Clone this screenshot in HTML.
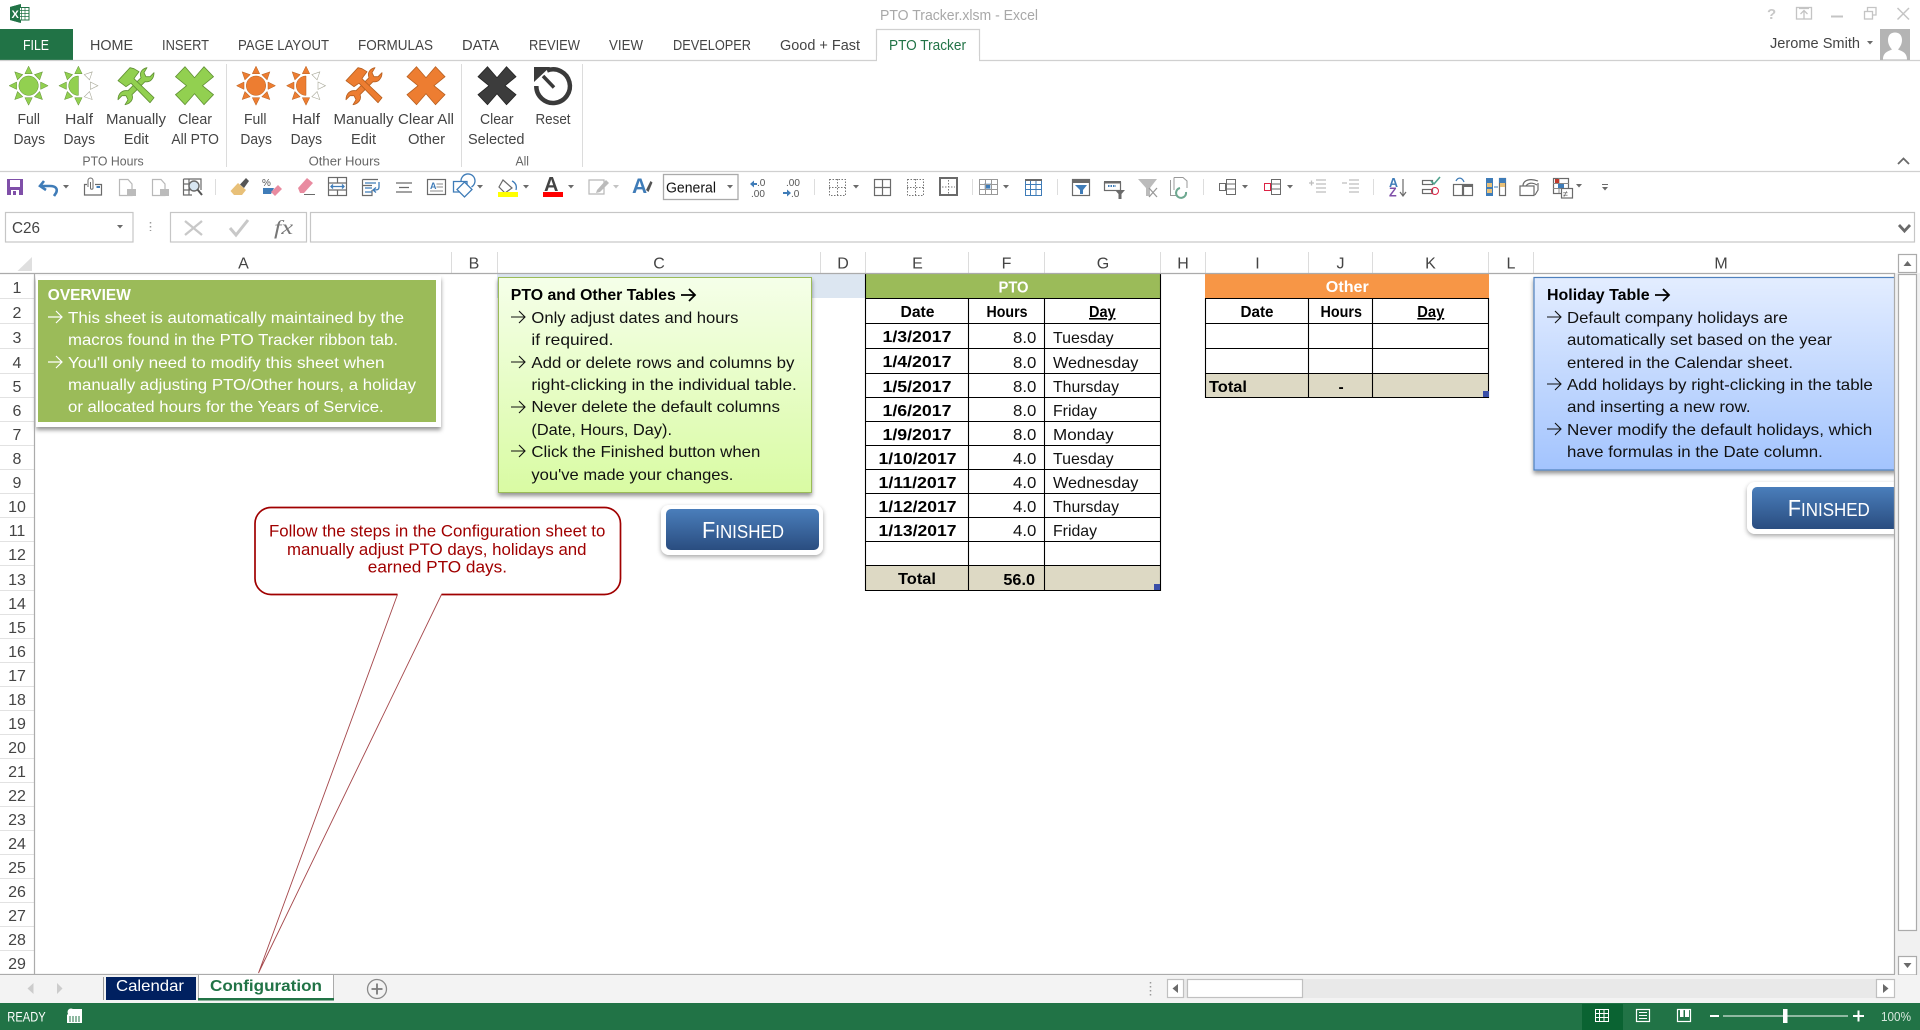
<!DOCTYPE html>
<html><head><meta charset="utf-8"><title>PTO Tracker.xlsm - Excel</title>
<style>
html,body{margin:0;padding:0;background:#fff;width:1920px;height:1030px;overflow:hidden}
svg{display:block;position:absolute;left:0;top:0;font-family:"Liberation Sans",Arial,sans-serif}
.t{font-size:15px;fill:#444}
.g{font-size:13px;fill:#666}
.h{font-size:16px;fill:#444;text-anchor:middle}
.w{font-size:16px;fill:#fff}
.k{font-size:16px;fill:#111}
.b{font-size:15.5px;font-weight:bold;fill:#000}
.c{font-size:17px;fill:#a00000}
.f{font-size:23px;fill:#fff}
.i{fill:none;stroke:#6a6a6a;stroke-width:1.2}
.l{fill:none;stroke:#b8b8b8;stroke-width:1.2}
.u{fill:none;stroke:#3f7cb8;stroke-width:1.3}
.z{fill:#6a6a6a}
</style></head><body>
<svg width="1920" height="1030" viewBox="0 0 1920 1030" xmlns="http://www.w3.org/2000/svg">
<defs>
<filter id="sh" x="-5%" y="-5%" width="110%" height="115%"><feDropShadow dx="0" dy="3" stdDeviation="2" flood-color="#000" flood-opacity=".42"/></filter>
<filter id="sh2" x="-5%" y="-10%" width="110%" height="130%"><feDropShadow dx="0" dy="2" stdDeviation="2.5" flood-color="#000" flood-opacity=".35"/></filter>
<linearGradient id="gg" x1="0" y1="0" x2="0" y2="1"><stop offset="0" stop-color="#f5ffe9"/><stop offset="1" stop-color="#d9fba3"/></linearGradient>
<linearGradient id="gb" x1="0" y1="0" x2="0" y2="1"><stop offset="0" stop-color="#e3edff"/><stop offset="1" stop-color="#a3c4fe"/></linearGradient>
<linearGradient id="gf" x1="0" y1="0" x2="0" y2="1"><stop offset="0" stop-color="#4a7ebb"/><stop offset="1" stop-color="#2a4d80"/></linearGradient>
<g id="r"><path d="M0-19.5L3.7-12H-3.7Z"/></g>
<g id="sun" stroke-width=".5"><circle cx="19" cy="19" r="9.7"/>
<use href="#r" transform="translate(19 19)"/><use href="#r" transform="translate(19 19) rotate(45)"/><use href="#r" transform="translate(19 19) rotate(90)"/><use href="#r" transform="translate(19 19) rotate(135)"/><use href="#r" transform="translate(19 19) rotate(180)"/><use href="#r" transform="translate(19 19) rotate(225)"/><use href="#r" transform="translate(19 19) rotate(270)"/><use href="#r" transform="translate(19 19) rotate(315)"/></g>
<g id="half" stroke-width=".5"><path d="M19 9.3A9.7 9.7 0 0 0 19 28.7Z"/>
<use href="#r" transform="translate(19 19)"/><use href="#r" transform="translate(19 19) rotate(225)"/><use href="#r" transform="translate(19 19) rotate(270)"/><use href="#r" transform="translate(19 19) rotate(315)"/><use href="#r" transform="translate(19 19) rotate(180)"/>
<g fill="#fff" stroke="#a8a898" stroke-width=".6"><use href="#r" transform="translate(19 19) rotate(45)"/><use href="#r" transform="translate(19 19) rotate(90)"/><use href="#r" transform="translate(19 19) rotate(135)"/></g></g>
<g id="tools" stroke-width=".8" stroke-linejoin="round">
<path d="M24 11C22 6 25 2 30 1L27 6 29 10 33 10 37 6C37 12 33 16 28 15L15 28C17 33 13 37 8 38L11 33 9 29 5 29 1 33C1 27 5 23 11 24Z"/>
<path d="M1 14L13 1 17 2 22 5 19 9 17 12 37 31 33 36 14 16.500 9 20Z"/></g>
<path id="x" stroke-width=".8" d="M9.5 0L19 11 28.5 0 38 10 27 19 38 28 28.5 38 19 27 9.5 38 0 28 11 19 0 10Z"/>
<path id="car" d="M0 0H6L3 3.5Z" fill="#6a6a6a"/>
</defs>

<!-- Title bar -->
<path d="M10 7L21 4V23L10 20Z" fill="#217346"/><rect x="19" y="7.500" width="10" height="12.500" fill="#fff" stroke="#217346"/><path d="M21.500 8V20M25 8V20M19 10.500H29M19 13.500H29M19 16.500H29" stroke="#217346" stroke-width=".7"/><path d="M10 7L20 4.300V22.700L10 20Z" fill="#217346"/><text x="11.500" y="18" font-size="11" font-weight="bold" fill="#fff">X</text>
<text x="880" y="20" font-size="14.5" fill="#a8a8a8" textLength="158" lengthAdjust="spacingAndGlyphs">PTO Tracker.xlsm - Excel</text>
<text x="1767" y="19" font-size="15" font-weight="bold" fill="#c8c8c8">?</text>
<g fill="none" stroke="#c4c4c4" stroke-width="1.3"><rect x="1796.5" y="7.5" width="15" height="11.5"/><path d="M1804 19V11M1800.5 14L1804 10.5 1807.5 14M1799 8.5H1809"/><path d="M1831 16.5H1843" stroke-width="2"/><rect x="1864.5" y="11.5" width="8" height="7.5"/><path d="M1867.5 11V7.5H1876V15H1873"/><path d="M1897.5 8L1909 19.5M1909 8L1897.5 19.5" stroke-width="1.5"/></g>

<!-- Tabs -->
<rect x="0" y="29" width="73" height="31" fill="#217346"/>
<path d="M0 60.5H876.5V29.5H979.5V60.5H1920" fill="none" stroke="#d0d0d0" stroke-width="1.2"/>
<rect x="877" y="56" width="102" height="5" fill="#fff"/>
<text x="23" y="50" font-size="14.5" fill="#fff" textLength="26" lengthAdjust="spacingAndGlyphs">FILE</text>
<text class="t" x="90" y="50" textLength="43" lengthAdjust="spacingAndGlyphs">HOME</text>
<text class="t" x="162" y="50" textLength="47" lengthAdjust="spacingAndGlyphs">INSERT</text>
<text class="t" x="238" y="50" textLength="91" lengthAdjust="spacingAndGlyphs">PAGE LAYOUT</text>
<text class="t" x="358" y="50" textLength="75" lengthAdjust="spacingAndGlyphs">FORMULAS</text>
<text class="t" x="462" y="50" textLength="37" lengthAdjust="spacingAndGlyphs">DATA</text>
<text class="t" x="529" y="50" textLength="51" lengthAdjust="spacingAndGlyphs">REVIEW</text>
<text class="t" x="609" y="50" textLength="34" lengthAdjust="spacingAndGlyphs">VIEW</text>
<text class="t" x="673" y="50" textLength="78" lengthAdjust="spacingAndGlyphs">DEVELOPER</text>
<text class="t" x="780" y="50" textLength="80" lengthAdjust="spacingAndGlyphs">Good + Fast</text>
<text class="t" x="889" y="50" style="fill:#217346" textLength="77" lengthAdjust="spacingAndGlyphs">PTO Tracker</text>
<text class="t" x="1770" y="48" textLength="90" lengthAdjust="spacingAndGlyphs">Jerome Smith</text>
<use href="#car" x="1867" y="41"/>
<rect x="1880" y="29" width="30" height="31" fill="#b4b4b4"/><path d="M1883 59.5C1883 52 1889 51 1892 49.5 1889 46 1888 43 1888 40 1888 35 1891 32.5 1895 32.5 1899 32.5 1902 35 1902 40 1902 43 1901 46 1898 49.5 1901 51 1907 52 1907 59.5Z" fill="#fff"/>

<!-- Ribbon icons -->
<g fill="#92d050" stroke="#5f8f33">
<use href="#sun" x="9.6" y="66.7"/><use href="#half" x="59.4" y="66.7"/><use href="#tools" x="117" y="66.7"/><use href="#x" x="175.5" y="66.7"/>
</g>
<g fill="#ed7d31" stroke="#b65f20">
<use href="#sun" x="237" y="66.7"/><use href="#half" x="287" y="66.7"/><use href="#tools" x="345" y="66.7"/><use href="#x" x="407" y="66.7"/>
</g>
<use href="#x" x="478" y="66.7" fill="#3c3c3c" stroke="#222"/>
<g fill="none" stroke="#3a3a3a"><path d="M547 70.500A16.800 16.800 0 1 1 536.300 86" stroke-width="4.500"/><path d="M543 76L554 87.500" stroke-width="3.500"/></g><path d="M534 67H550L534 82Z" fill="#3a3a3a"/>

<!-- Ribbon labels -->
<text class="t" x="17.5" y="124" textLength="22.5" lengthAdjust="spacingAndGlyphs">Full</text>
<text class="t" x="13.5" y="144" textLength="31.5" lengthAdjust="spacingAndGlyphs">Days</text>
<text class="t" x="65" y="124" textLength="28" lengthAdjust="spacingAndGlyphs">Half</text>
<text class="t" x="63.5" y="144" textLength="31.5" lengthAdjust="spacingAndGlyphs">Days</text>
<text class="t" x="106" y="124" textLength="60" lengthAdjust="spacingAndGlyphs">Manually</text>
<text class="t" x="123.7" y="144" textLength="25" lengthAdjust="spacingAndGlyphs">Edit</text>
<text class="t" x="178" y="124" textLength="34" lengthAdjust="spacingAndGlyphs">Clear</text>
<text class="t" x="171.4" y="144" textLength="47.5" lengthAdjust="spacingAndGlyphs">All PTO</text>
<text class="t" x="244" y="124" textLength="22.5" lengthAdjust="spacingAndGlyphs">Full</text>
<text class="t" x="240.4" y="144" textLength="31.5" lengthAdjust="spacingAndGlyphs">Days</text>
<text class="t" x="292" y="124" textLength="28" lengthAdjust="spacingAndGlyphs">Half</text>
<text class="t" x="290.6" y="144" textLength="31.5" lengthAdjust="spacingAndGlyphs">Days</text>
<text class="t" x="333.5" y="124" textLength="60" lengthAdjust="spacingAndGlyphs">Manually</text>
<text class="t" x="351" y="144" textLength="25" lengthAdjust="spacingAndGlyphs">Edit</text>
<text class="t" x="398" y="124" textLength="56" lengthAdjust="spacingAndGlyphs">Clear All</text>
<text class="t" x="408" y="144" textLength="37" lengthAdjust="spacingAndGlyphs">Other</text>
<text class="t" x="480" y="124" textLength="33.5" lengthAdjust="spacingAndGlyphs">Clear</text>
<text class="t" x="468" y="144" textLength="56.5" lengthAdjust="spacingAndGlyphs">Selected</text>
<text class="t" x="535.5" y="124" textLength="35" lengthAdjust="spacingAndGlyphs">Reset</text>
<text class="g" x="82.4" y="165.5" textLength="61.3" lengthAdjust="spacingAndGlyphs">PTO Hours</text>
<text class="g" x="308.6" y="165.5" textLength="71.4" lengthAdjust="spacingAndGlyphs">Other Hours</text>
<text class="g" x="515.5" y="165.5" textLength="13.5" lengthAdjust="spacingAndGlyphs">All</text>
<path d="M226.5 64V167M461.5 64V167M582.5 64V167" stroke="#dcdcdc"/>
<path d="M1898 164L1903.5 158.5 1909 164" fill="none" stroke="#6a6a6a" stroke-width="1.8"/>
<path d="M0 171.5H1920" stroke="#d0d0d0" stroke-width="1.2"/>

<!-- QAT -->
<path d="M7 179H23V195H7Z" fill="#7f4fa8"/><rect x="10" y="180" width="10" height="7" fill="#fff"/><rect x="11" y="190" width="8" height="5" fill="#fff"/><rect x="13" y="191" width="3" height="4" fill="#7f4fa8"/>
<path d="M44 181L40 186 46 190M41 186H50C56 186 58 189 56 193L54 196" fill="none" stroke="#3f7cb8" stroke-width="2.6"/><use href="#car" x="63" y="185"/>
<path class="i" d="M87 184.500H84.500V195H101.500V184.500H95"/><path d="M88 187V180.500A2.500 2.500 0 0 1 93 180.500V188A1.200 1.200 0 0 1 90.500 188V182" fill="none" stroke="#6a6a6a"/><rect x="96.500" y="186" width="3.500" height="2" fill="#3f7cb8"/>
<path class="l" d="M119.5 179.5H128L132 184V195.5H119.5Z"/><rect x="127" y="189" width="9" height="7" fill="#bbb"/>
<path class="l" d="M152.5 179.5H161L165 184V195.5H152.5Z"/><rect x="160" y="189" width="9" height="7" fill="#bbb"/>
<path class="i" d="M183.5 179H201V190M183.5 179V195H192M183.5 184H195M183.5 190H190M189 179V195"/><circle cx="194" cy="186" r="5" fill="#d8e6f2" stroke="#6a6a6a" stroke-width="1.4"/><path d="M197.5 189.5L202 195" stroke="#555" stroke-width="2"/>
<path d="M215.5 179V195" stroke="#ddd"/>
<path d="M230.500 191L238 183 246 190 242 195 234 195Z" fill="#e8c078"/><path d="M240 184.500L246 178 249 181 244 188Z" fill="#555"/>
<text x="262" y="186" font-size="10" fill="#555">%</text><path d="M263 188H274L271 194H263Z" fill="#3f7cb8"/><path d="M271 192L278 185 282 189 275 196Z" fill="#e98ba0"/>
<path d="M298 188L307 178 313 183 304 193 300 193Z" fill="#e98ba0"/><path d="M304 194.5H315" stroke="#6a6a6a"/>
<rect x="328.5" y="177.5" width="18" height="18" class="i"/><path class="i" d="M329 183H346M329 190H346M337.5 177V183M337.5 190V195"/><path d="M331 186.5H344M333 184.5L331 186.5 333 188.5M342 184.5L344 186.5 342 188.5" class="u"/>
<path class="i" d="M362.5 179.5H378M362.5 179.5V195.5H372V190M362.5 185.5H372"/><path d="M365 183H376M365 188H372M365 192H372" stroke="#3f7cb8" stroke-width="1.2"/><path d="M379 182V187C379 190 377 190 373 190M376 187.5L373 190 376 192.5" class="u"/>
<path d="M396 183H412M399 187.5H409M396 192H412" class="i"/>
<rect x="427.5" y="179.5" width="18" height="15" class="i"/><text x="430" y="189" font-size="9" font-weight="bold" fill="#3f7cb8">A</text><path d="M436.5 184H443M436.5 187H443M430 191H443" stroke="#888"/>
<path d="M453.500 181.500H467V192H453.500Z" class="u"/><path d="M464.500 182L472 189.500 464.500 197 457 189.500Z" fill="#fff" class="u" style="fill:#fff"/><path d="M461 181A7 7 0 1 1 471.500 187" class="u"/><use href="#car" x="477" y="185"/>
<path d="M503 180L512 188 505 193 499 187Z" fill="#fff" stroke="#6a6a6a" stroke-width="1.2"/><path d="M512 181C516 183 517 186 516 190" class="u"/><rect x="498" y="192" width="20" height="5" fill="#ff0"/><use href="#car" x="523" y="185"/>
<text x="544" y="191" font-size="20" font-weight="bold" fill="#444">A</text><rect x="543" y="192" width="20" height="5" fill="#f00"/><use href="#car" x="568" y="185"/>
<path d="M589 180H604V194H589Z" class="l"/><path d="M597 190L606 180 609 183 600 192 596 193Z" fill="#bbb"/><use href="#car" x="613" y="185" opacity=".4"/>
<text x="632" y="193" font-size="21" font-weight="bold" fill="#3f7cb8">A</text><path d="M646 190L650.500 181 652.500 182.500 648.500 192Z" fill="#555"/>
<rect x="663.5" y="174.5" width="74.5" height="25" fill="#fff" stroke="#aaa" stroke-width="1.3"/>
<text x="666" y="192.5" font-size="15" fill="#111" textLength="50" lengthAdjust="spacingAndGlyphs">General</text><use href="#car" x="727" y="185"/>
<path d="M750 184L754 180.5V183H757V185H754V187.5Z" fill="#3f7cb8"/><text x="757" y="186" font-size="10" fill="#555">.0</text><text x="751" y="197" font-size="10" fill="#555">.00</text>
<text x="786" y="186" font-size="10" fill="#555">.00</text><path d="M783 192H787V189.5L791 193 787 196.5V194H783Z" fill="#3f7cb8"/><text x="791" y="197" font-size="10" fill="#555">.0</text>
<path d="M814.5 179V195M972.5 179V195M1057.5 179V195M1203.5 179V195M1373.5 179V195" stroke="#ddd"/>
<g fill="none" stroke="#777" stroke-dasharray="1.5 1.5"><rect x="829.5" y="179.5" width="16" height="16"/><path d="M829 187.5H846M837.5 179V196"/><rect x="907.5" y="179.5" width="16" height="16"/><path d="M907 187.5H924M915.5 179V196" /></g><use href="#car" x="853" y="185"/>
<g class="i"><rect x="874.5" y="179.5" width="16" height="16"/><path d="M874 187.5H891M882.5 179V196"/></g>
<rect x="940" y="178" width="17" height="17" class="i" style="stroke-width:2"/><path d="M948.5 180V194M942 187H955" stroke="#777" stroke-dasharray="1.5 1.5"/>
<rect x="984" y="183" width="8" height="7" fill="#c9dcef"/><rect x="986" y="184.500" width="4" height="4" fill="#3f7cb8"/><g fill="none" stroke="#999"><rect x="979.5" y="179.5" width="18" height="15"/><path d="M979 184.5H998M979 189.5H998M985.5 179V195M991.5 179V195"/></g><use href="#car" x="1003" y="185"/>
<g fill="none" stroke="#3f7cb8"><path d="M1025.5 179.5H1041.5V195.5H1025.5ZM1025 184.5H1042M1025 189.5H1042M1030.5 180V195M1036 180V195"/></g><path d="M1025 179H1042V181H1025Z" fill="#6a6a6a"/>
<rect x="1072.5" y="179.5" width="17" height="16" class="i"/><rect x="1072" y="179" width="18" height="4" fill="#6a6a6a"/><path d="M1075 185H1087L1083 190V194H1080V190Z" fill="#3f7cb8"/>
<rect x="1104.5" y="182.5" width="16" height="8" class="i"/><rect x="1104" y="181" width="17" height="2.500" fill="#6a6a6a"/><path d="M1108 186H1116" stroke="#3f7cb8" stroke-width="2" stroke-dasharray="1.500 1"/><path d="M1115 190H1125L1121.5 194V199H1118.5V194Z" fill="#6a6a6a"/>
<path d="M1138 179H1157L1150 188V196H1146V188Z" fill="#bbb"/><path d="M1149 188L1157 197M1157 188L1149 197" stroke="#999" stroke-width="1.3"/>
<path d="M1170.5 180V195.5H1176" stroke="#999" fill="none"/><path d="M1174 177.5H1183L1187 181V188M1174 177.5V190" stroke="#999" fill="none"/><path d="M1186 192A5 5 0 1 1 1180 188" fill="none" stroke="#6da890" stroke-width="2"/>
<g fill="none" stroke="#6a6a6a"><rect x="1219.5" y="183.5" width="6" height="7"/><rect x="1226.5" y="179.5" width="9" height="15"/><path d="M1226 184H1236M1226 189H1236"/></g><use href="#car" x="1242" y="185"/>
<g fill="none" stroke="#6a6a6a"><rect x="1264.5" y="183.5" width="6" height="7" stroke="#d24"/><rect x="1271.5" y="179.5" width="9" height="15"/><path d="M1271 184H1281M1271 189H1281"/></g><use href="#car" x="1287" y="185"/>
<g stroke="#bdbdbd" fill="none" stroke-width="1.3"><path d="M1316 180H1326M1316 184H1326M1316 188H1326M1316 192H1326M1309 183H1314M1311.5 180.500V185.500"/><path d="M1349 180H1359M1349 184H1359M1349 188H1359M1349 192H1359M1342 183H1347"/></g>
<text x="1389" y="187" font-size="12.500" font-weight="bold" fill="#3f7cb8">A</text><text x="1389" y="196.500" font-size="12.500" font-weight="bold" fill="#7f4fa8">Z</text><path d="M1403 179V195M1400 192L1403 196 1406 192" class="i"/>
<rect x="1422.500" y="180.500" width="10" height="4" class="i"/><rect x="1422.500" y="189.500" width="10" height="4" class="i"/><path d="M1431 181L1434 184 1440 177" fill="none" stroke="#4fa28d" stroke-width="1.6"/><circle cx="1435" cy="191" r="3.500" fill="none" stroke="#d24"/>
<rect x="1453.500" y="184.500" width="9" height="11" class="i"/><rect x="1463.500" y="184.500" width="9" height="11" class="i"/><rect x="1463" y="184" width="10" height="3" fill="#6a6a6a"/><path d="M1456 181C1458 177 1462 177 1464 182" class="u"/>
<rect x="1486" y="178" width="7" height="18" fill="#3f7cb8"/><rect x="1487" y="183" width="5" height="4" fill="#e8c078"/><rect x="1487" y="189" width="5" height="4" fill="#e8c078"/><path d="M1494 187H1498" stroke="#3f7cb8"/><rect x="1499.500" y="178.500" width="6" height="17" class="i"/><rect x="1499" y="178" width="7" height="5" fill="#3f7cb8"/><rect x="1500" y="183" width="5" height="4" fill="#e8c078"/>
<rect x="1520" y="186" width="14" height="9.500" class="i"/><path d="M1523 186C1523 180 1530 178 1538 181M1526 186C1528 183 1532 182 1537 185M1535 195L1538 190V183" class="i"/>
<rect x="1553.500" y="178.500" width="15" height="15" class="i"/><path d="M1553 183.500H1569M1553 188.500H1569M1559 178V193" stroke="#888"/><rect x="1555" y="179" width="4" height="4" fill="#c0392b"/><rect x="1558" y="184" width="6" height="4" fill="#3f7cb8"/><rect x="1561.500" y="188.500" width="11" height="9.500" class="i" style="fill:#fff"/><text x="1563" y="197" font-size="9" fill="#555">≠</text><use href="#car" x="1576" y="184"/>
<path d="M1602 184.500H1608" stroke="#6a6a6a"/><use href="#car" x="1602" y="187"/>

<!-- Formula bar -->
<g fill="#fff" stroke="#c6c6c6" stroke-width="1.2"><rect x="5.500" y="212.500" width="127.500" height="29.500"/><rect x="170.500" y="212.500" width="136" height="29.500"/><rect x="310.500" y="212.500" width="1604" height="29.500"/></g>
<text x="12" y="233" font-size="15.500" fill="#444" textLength="28" lengthAdjust="spacingAndGlyphs">C26</text><use href="#car" x="117" y="225"/>
<path d="M150.500 222V231" stroke="#999" stroke-dasharray="1.500 2.500" stroke-width="1.500"/>
<path d="M185 221L202 235M202 221L185 235" stroke="#c8c8c8" stroke-width="2.300"/>
<path d="M230 228L236 235 248 220" fill="none" stroke="#c8c8c8" stroke-width="3"/>
<text x="274" y="234" font-size="20" font-style="italic" fill="#777" font-family="Liberation Serif" textLength="19" lengthAdjust="spacingAndGlyphs">fx</text>
<path d="M1899 225L1904.500 231 1910 225" fill="none" stroke="#6a6a6a" stroke-width="2.800"/>

<!-- Grid headers -->
<path d="M32 257V271H17.500Z" fill="#dfdfdf"/>
<path d="M451.500 252V273M497.500 252V273M820.500 252V273M865.500 252V273M968.500 252V273M1044.500 252V273M1160.500 252V273M1205.500 252V273M1308.500 252V273M1372.500 252V273M1488.500 252V273M1533.500 252V273" stroke="#dcdcdc"/>
<text class="h" x="243.500" y="268.700">A</text><text class="h" x="474" y="268.700">B</text><text class="h" x="659" y="268.700">C</text><text class="h" x="843" y="268.700">D</text><text class="h" x="917.500" y="268.700">E</text><text class="h" x="1006.500" y="268.700">F</text><text class="h" x="1103" y="268.700">G</text><text class="h" x="1183" y="268.700">H</text><text class="h" x="1257.500" y="268.700">I</text><text class="h" x="1340.500" y="268.700">J</text><text class="h" x="1430.500" y="268.700">K</text><text class="h" x="1511" y="268.700">L</text><text class="h" x="1721" y="268.700">M</text>
<rect x="497" y="274" width="368" height="24" fill="#dce6f1"/>
<path d="M0 298.500H34M0 323.500H34M0 348.500H34M0 373.500H34M0 397.500H34M0 421.500H34M0 445.500H34M0 469.500H34M0 493.500H34M0 517.500H34M0 541.500H34M0 565.500H34M0 590.500H34M0 614.500H34M0 638.500H34M0 662.500H34M0 686.500H34M0 710.500H34M0 734.500H34M0 758.500H34M0 782.500H34M0 806.500H34M0 830.500H34M0 854.500H34M0 878.500H34M0 902.500H34M0 926.500H34M0 950.500H34" stroke="#e2e2e2"/>
<g>
<text class="h" x="17" y="293">1</text><text class="h" x="17" y="318">2</text><text class="h" x="17" y="343">3</text><text class="h" x="17" y="368">4</text><text class="h" x="17" y="392">5</text><text class="h" x="17" y="416">6</text><text class="h" x="17" y="440">7</text><text class="h" x="17" y="464">8</text><text class="h" x="17" y="488">9</text><text class="h" x="17" y="512">10</text><text class="h" x="17" y="536">11</text><text class="h" x="17" y="560">12</text><text class="h" x="17" y="585">13</text><text class="h" x="17" y="609">14</text><text class="h" x="17" y="633">15</text><text class="h" x="17" y="657">16</text><text class="h" x="17" y="681">17</text><text class="h" x="17" y="705">18</text><text class="h" x="17" y="729">19</text><text class="h" x="17" y="753">20</text><text class="h" x="17" y="777">21</text><text class="h" x="17" y="801">22</text><text class="h" x="17" y="825">23</text><text class="h" x="17" y="849">24</text><text class="h" x="17" y="873">25</text><text class="h" x="17" y="897">26</text><text class="h" x="17" y="921">27</text><text class="h" x="17" y="945">28</text><text class="h" x="17" y="969">29</text>
</g>

<!-- Overview -->
<rect x="36" y="276" width="405" height="151" fill="#fff" filter="url(#sh)"/>
<rect x="38" y="280" width="398" height="142" fill="#9bbb59"/>
<text class="w" x="47.800" y="300" font-weight="bold" textLength="83" lengthAdjust="spacingAndGlyphs">OVERVIEW</text>
<g fill="none" stroke="#fff" stroke-width="1.200"><path d="M48 317H62M56 311L62 317 56 323M48 362H62M56 356L62 362 56 368"/></g>
<text class="w" x="68" y="323" textLength="336" lengthAdjust="spacingAndGlyphs">This sheet is automatically maintained by the</text>
<text class="w" x="68" y="345" textLength="330" lengthAdjust="spacingAndGlyphs">macros found in the PTO Tracker ribbon tab.</text>
<text class="w" x="68" y="368" textLength="316.500" lengthAdjust="spacingAndGlyphs">You'll only need to modify this sheet when</text>
<text class="w" x="68" y="390" textLength="348" lengthAdjust="spacingAndGlyphs">manually adjusting PTO/Other hours, a holiday</text>
<text class="w" x="68" y="412" textLength="315.700" lengthAdjust="spacingAndGlyphs">or allocated hours for the Years of Service.</text>

<!-- Green box -->
<rect x="498.500" y="277.500" width="313" height="215" fill="url(#gg)" stroke="#9bbb59" filter="url(#sh)"/>
<text class="b" x="510.800" y="300" textLength="165" lengthAdjust="spacingAndGlyphs">PTO and Other Tables</text>
<path d="M681 295H695M689 289L695 295 689 301" fill="none" stroke="#000" stroke-width="1.800"/>
<g fill="none" stroke="#111" stroke-width="1.100"><path d="M511 317H525M519 311L525 317 519 323M511 362H525M519 356L525 362 519 368M511 407H525M519 401L525 407 519 413M511 451H525M519 445L525 451 519 457"/></g>
<text class="k" x="531.400" y="323" textLength="207" lengthAdjust="spacingAndGlyphs">Only adjust dates and hours</text>
<text class="k" x="531.400" y="345" textLength="82" lengthAdjust="spacingAndGlyphs">if required.</text>
<text class="k" x="531.400" y="368" textLength="263" lengthAdjust="spacingAndGlyphs">Add or delete rows and columns by</text>
<text class="k" x="531.400" y="390" textLength="265.400" lengthAdjust="spacingAndGlyphs">right-clicking in the individual table.</text>
<text class="k" x="531.400" y="412" textLength="248.600" lengthAdjust="spacingAndGlyphs">Never delete the default columns</text>
<text class="k" x="531.400" y="435" textLength="140.600" lengthAdjust="spacingAndGlyphs">(Date, Hours, Day).</text>
<text class="k" x="531.400" y="457" textLength="229" lengthAdjust="spacingAndGlyphs">Click the Finished button when</text>
<text class="k" x="531.400" y="480" textLength="202" lengthAdjust="spacingAndGlyphs">you've made your changes.</text>

<!-- Finished button 1 -->
<rect x="661" y="505" width="162" height="50" rx="8" fill="#fff" filter="url(#sh2)"/>
<rect x="666" y="509" width="153" height="41" rx="5" fill="url(#gf)"/>
<text class="f" x="702" y="538" textLength="82" lengthAdjust="spacingAndGlyphs">F<tspan font-size="18">INISHED</tspan></text>

<!-- Callout -->
<path d="M271 507.500H604.500A16 16 0 0 1 620.500 523.500V578.500A16 16 0 0 1 604.500 594.500H441.500L258.500 973 397.500 594.500H271A16 16 0 0 1 255 578.500V523.500A16 16 0 0 1 271 507.500Z" fill="#fff"/>
<path d="M441.500 594.500L258.500 973 397.500 594.500" fill="none" stroke="#a4464a" stroke-width=".9"/>
<path d="M397.500 594.500H271A16 16 0 0 1 255 578.500V523.500A16 16 0 0 1 271 507.500H604.500A16 16 0 0 1 620.500 523.500V578.500A16 16 0 0 1 604.500 594.500H441.500" fill="none" stroke="#a00000" stroke-width="1.700"/>
<text class="c" x="269" y="536.700" textLength="336.300" lengthAdjust="spacingAndGlyphs">Follow the steps in the Configuration sheet to</text>
<text class="c" x="287" y="555" textLength="299.500" lengthAdjust="spacingAndGlyphs">manually adjust PTO days, holidays and</text>
<text class="c" x="367.800" y="572.700" textLength="139.200" lengthAdjust="spacingAndGlyphs">earned PTO days.</text>

<!-- PTO table -->
<rect x="865.500" y="273" width="295" height="25" fill="#9bbb59"/>
<rect x="865.500" y="565" width="295" height="25" fill="#ddd9c4"/>
<path d="M865.500 273V590.500H1160.500V273M968.500 298V590M1044.500 298V590M865 298.500H1160M865 323.500H1160M865 348.500H1160M865 373.500H1160M865 397.500H1160M865 421.500H1160M865 445.500H1160M865 469.500H1160M865 493.500H1160M865 517.500H1160M865 541.500H1160M865 565.500H1160" fill="none" stroke="#000" stroke-width="1.100"/>
<rect x="1154" y="584" width="6" height="6" fill="#3a4fa8"/>
<text class="b" x="998.500" y="292.500" style="fill:#fff" textLength="30" lengthAdjust="spacingAndGlyphs">PTO</text>
<text class="b" x="900.500" y="317" textLength="34" lengthAdjust="spacingAndGlyphs">Date</text>
<text class="b" x="986.500" y="317" textLength="41" lengthAdjust="spacingAndGlyphs">Hours</text>
<text class="b" x="1089" y="317" text-decoration="underline" textLength="26.600" lengthAdjust="spacingAndGlyphs">Day</text>
<text class="b" x="882.500" y="342" textLength="69" lengthAdjust="spacingAndGlyphs">1/3/2017</text><text class="k" x="1013" y="343" textLength="23.400" lengthAdjust="spacingAndGlyphs">8.0</text><text class="k" x="1053" y="343" textLength="60.600" lengthAdjust="spacingAndGlyphs">Tuesday</text>
<text class="b" x="882.500" y="367" textLength="69" lengthAdjust="spacingAndGlyphs">1/4/2017</text><text class="k" x="1013" y="368" textLength="23.400" lengthAdjust="spacingAndGlyphs">8.0</text><text class="k" x="1053" y="368" textLength="85.400" lengthAdjust="spacingAndGlyphs">Wednesday</text>
<text class="b" x="882.500" y="392" textLength="69" lengthAdjust="spacingAndGlyphs">1/5/2017</text><text class="k" x="1013" y="392" textLength="23.400" lengthAdjust="spacingAndGlyphs">8.0</text><text class="k" x="1053" y="392" textLength="66" lengthAdjust="spacingAndGlyphs">Thursday</text>
<text class="b" x="882.500" y="416" textLength="69" lengthAdjust="spacingAndGlyphs">1/6/2017</text><text class="k" x="1013" y="416" textLength="23.400" lengthAdjust="spacingAndGlyphs">8.0</text><text class="k" x="1053" y="416" textLength="44" lengthAdjust="spacingAndGlyphs">Friday</text>
<text class="b" x="882.500" y="440" textLength="69" lengthAdjust="spacingAndGlyphs">1/9/2017</text><text class="k" x="1013" y="440" textLength="23.400" lengthAdjust="spacingAndGlyphs">8.0</text><text class="k" x="1053" y="440" textLength="60.600" lengthAdjust="spacingAndGlyphs">Monday</text>
<text class="b" x="878.500" y="464" textLength="78" lengthAdjust="spacingAndGlyphs">1/10/2017</text><text class="k" x="1013" y="464" textLength="23.400" lengthAdjust="spacingAndGlyphs">4.0</text><text class="k" x="1053" y="464" textLength="60.600" lengthAdjust="spacingAndGlyphs">Tuesday</text>
<text class="b" x="878.500" y="488" textLength="78" lengthAdjust="spacingAndGlyphs">1/11/2017</text><text class="k" x="1013" y="488" textLength="23.400" lengthAdjust="spacingAndGlyphs">4.0</text><text class="k" x="1053" y="488" textLength="85.400" lengthAdjust="spacingAndGlyphs">Wednesday</text>
<text class="b" x="878.500" y="512" textLength="78" lengthAdjust="spacingAndGlyphs">1/12/2017</text><text class="k" x="1013" y="512" textLength="23.400" lengthAdjust="spacingAndGlyphs">4.0</text><text class="k" x="1053" y="512" textLength="66" lengthAdjust="spacingAndGlyphs">Thursday</text>
<text class="b" x="878.500" y="536" textLength="78" lengthAdjust="spacingAndGlyphs">1/13/2017</text><text class="k" x="1013" y="536" textLength="23.400" lengthAdjust="spacingAndGlyphs">4.0</text><text class="k" x="1053" y="536" textLength="44" lengthAdjust="spacingAndGlyphs">Friday</text>
<text class="b" x="898" y="584" textLength="38" lengthAdjust="spacingAndGlyphs">Total</text>
<text class="b" x="1003.400" y="585" textLength="31.600" lengthAdjust="spacingAndGlyphs">56.0</text>

<!-- Other table -->
<rect x="1205" y="273" width="284" height="25" fill="#f79646"/>
<rect x="1205" y="373" width="284" height="24" fill="#ddd9c4"/>
<path d="M1205.500 298V397.500H1488.500V298M1308.500 298V397M1372.500 298V397M1205 298.500H1489M1205 323.500H1489M1205 348.500H1489M1205 373.500H1489" fill="none" stroke="#000" stroke-width="1.100"/>
<rect x="1483" y="391" width="6" height="6" fill="#3a4fa8"/>
<text class="b" x="1325.800" y="292" style="fill:#fff" textLength="43" lengthAdjust="spacingAndGlyphs">Other</text>
<text class="b" x="1240.500" y="317" textLength="33" lengthAdjust="spacingAndGlyphs">Date</text>
<text class="b" x="1320.500" y="317" textLength="41.500" lengthAdjust="spacingAndGlyphs">Hours</text>
<text class="b" x="1417.300" y="317" text-decoration="underline" textLength="27" lengthAdjust="spacingAndGlyphs">Day</text>
<text class="b" x="1209" y="392" textLength="38" lengthAdjust="spacingAndGlyphs">Total</text>
<text class="b" x="1338.500" y="392">-</text>

<!-- Blue box -->
<rect x="1534" y="277.500" width="375" height="192.500" fill="url(#gb)" stroke="#4f81bd" stroke-width="1.200" filter="url(#sh)"/>
<text class="b" x="1547" y="300" textLength="102.600" lengthAdjust="spacingAndGlyphs">Holiday Table</text>
<path d="M1655 295H1669M1663 289L1669 295 1663 301" fill="none" stroke="#000" stroke-width="1.800"/>
<g fill="none" stroke="#111" stroke-width="1.100"><path d="M1547 317H1561M1555 311L1561 317 1555 323M1547 384H1561M1555 378L1561 384 1555 390M1547 429H1561M1555 423L1561 429 1555 435"/></g>
<text class="k" x="1567" y="323" textLength="220.800" lengthAdjust="spacingAndGlyphs">Default company holidays are</text>
<text class="k" x="1567" y="345" textLength="265" lengthAdjust="spacingAndGlyphs">automatically set based on the year</text>
<text class="k" x="1567" y="368" textLength="226" lengthAdjust="spacingAndGlyphs">entered in the Calendar sheet.</text>
<text class="k" x="1567" y="390" textLength="305.800" lengthAdjust="spacingAndGlyphs">Add holidays by right-clicking in the table</text>
<text class="k" x="1567" y="412" textLength="183.600" lengthAdjust="spacingAndGlyphs">and inserting a new row.</text>
<text class="k" x="1567" y="435" textLength="305.300" lengthAdjust="spacingAndGlyphs">Never modify the default holidays, which</text>
<text class="k" x="1567" y="457" textLength="255.800" lengthAdjust="spacingAndGlyphs">have formulas in the Date column.</text>

<!-- Finished button 2 -->
<rect x="1747" y="482" width="170" height="52" rx="8" fill="#fff" filter="url(#sh2)"/>
<rect x="1752" y="487" width="165" height="42" rx="5" fill="url(#gf)"/>
<text class="f" x="1787.800" y="516" textLength="82" lengthAdjust="spacingAndGlyphs">F<tspan font-size="18">INISHED</tspan></text>

<!-- Grid frame + scrollbars -->
<rect x="1895" y="252" width="25" height="723" fill="#fff"/>
<rect x="1895" y="273" width="25" height="702" fill="#f1f1f1"/>
<path d="M0 273.500H1895M34.500 273V974M1894.500 273V974M0 974.500H1895" fill="none" stroke="#ababab" stroke-width="1.200"/>
<g fill="#fff" stroke="#ababab" stroke-width="1.200"><rect x="1898.500" y="254.500" width="18" height="18"/><rect x="1898.500" y="274.500" width="18" height="656"/><rect x="1898.500" y="956.500" width="18" height="18.500"/></g>
<path d="M1903.500 266H1911.500L1907.500 261Z" fill="#6a6a6a"/><path d="M1903.500 963H1911.500L1907.500 968Z" fill="#6a6a6a"/>

<!-- Sheet tabs -->
<rect x="0" y="975" width="1920" height="28" fill="#f3f3f3"/>
<path d="M33.500 983V994L27.500 988.500Z" fill="#ccc"/><path d="M57 983V994L62.500 988.500Z" fill="#ccc"/>
<path d="M103.500 977V1000" stroke="#999"/>
<rect x="106" y="977" width="90" height="23" fill="#002060"/>
<text x="116" y="991" font-size="16" fill="#fff" textLength="68" lengthAdjust="spacingAndGlyphs">Calendar</text>
<path d="M198.500 975V1000H333.500V975" fill="#fff" stroke="#ababab"/>
<rect x="198" y="998" width="136" height="2.500" fill="#217346"/>
<text x="210" y="991" font-size="16" font-weight="bold" fill="#217346" textLength="112" lengthAdjust="spacingAndGlyphs">Configuration</text>
<circle cx="377" cy="989" r="9.500" fill="none" stroke="#8a8a8a" stroke-width="1.300"/><path d="M371.500 989H382.500M377 983.500V994.500" stroke="#7a7a7a" stroke-width="1.800"/>
<path d="M1150.500 982V996" stroke="#999" stroke-dasharray="1.500 2.500" stroke-width="1.500"/>
<rect x="1168" y="979" width="708" height="19" fill="#e9e9e9"/>
<g fill="#fff" stroke="#c0c0c0" stroke-width="1.200"><rect x="1167.500" y="979.500" width="16" height="18"/><rect x="1187.500" y="979.500" width="115" height="18"/><rect x="1876.500" y="979.500" width="18" height="18"/></g>
<path d="M1178 984V993L1172.500 988.500Z" fill="#6a6a6a"/><path d="M1883 984V993L1888.500 988.500Z" fill="#6a6a6a"/>

<!-- Status bar -->
<rect x="0" y="1003" width="1920" height="27" fill="#217346"/>
<text x="7.300" y="1021.500" font-size="14" fill="#fff" textLength="38.400" lengthAdjust="spacingAndGlyphs">READY</text>
<circle cx="71" cy="1012" r="3.500" fill="#fff"/><path d="M73 1009H82V1023H67V1015" fill="#fff"/><path d="M69 1017H80M69 1019H80M69 1021H80" stroke="#217346" stroke-dasharray="2 1"/>
<rect x="1582" y="1004" width="41" height="26" fill="#0a6332"/>
<g fill="none" stroke="#fff"><path d="M1595.500 1009.500H1608.500V1021.500H1595.500ZM1595 1013.500H1609M1595 1017.500H1609M1599.500 1009V1022M1604 1009V1022"/><rect x="1636.500" y="1009.500" width="13" height="12" stroke-width="1.200"/><path d="M1639 1012.500H1647M1639 1015.500H1647M1639 1018.500H1647"/><rect x="1677.500" y="1009.500" width="13" height="12" stroke-width="1.200"/></g>
<rect x="1680" y="1009" width="3.500" height="8" fill="#fff"/><rect x="1685" y="1009" width="4" height="8" fill="#fff"/>
<path d="M1723 1016H1848" stroke="#fff" fill="none"/><path d="M1710 1016H1719M1853 1016H1864M1858.500 1010.500V1021.500" stroke="#fff" stroke-width="2" fill="none"/>
<rect x="1783" y="1009" width="4.500" height="14" fill="#fff"/>
<text x="1881" y="1021" font-size="13" fill="#d8e8de" textLength="30" lengthAdjust="spacingAndGlyphs">100%</text>
</svg>
</body></html>
